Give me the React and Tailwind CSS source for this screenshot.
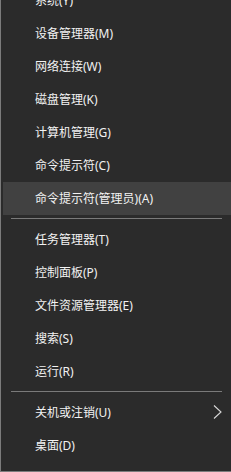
const groups = [
  ["系统(Y)", "设备管理器(M)", "网络连接(W)", "磁盘管理(K)", "计算机管理(G)", "命令提示符(C)", "命令提示符(管理员)(A)"],
  ["任务管理器(T)", "控制面板(P)", "文件资源管理器(E)", "搜索(S)", "运行(R)"],
  ["关机或注销(U)", "桌面(D)"],
];

function Item({ label, active, arrow }) {
  return (
    <div
      className={
        "relative flex items-center h-[33px] shrink-0 text-[12px] text-[#f2f2f2] " +
        (active ? "ml-[2px] pl-[32px] bg-[#414141]" : "pl-[34px]")
      }
    >
      {label}
      {arrow && (
        <svg className="absolute right-[9px] top-[9px]" width="9" height="14" viewBox="0 0 9 14" fill="none">
          <path d="M1 0.5 L8 7 L1 13.5" stroke="#d8d8d8" strokeWidth="1.1" />
        </svg>
      )}
    </div>
  );
}

export default function App() {
  return (
    <div className="w-[231px] h-[472px] overflow-hidden bg-[#2b2b2b] border-l border-b border-[#7c7c7c] font-['Noto_Sans','Noto_Sans_CJK_SC',sans-serif]">
      <div className="flex flex-col -mt-[16px]">
        {groups.map((g, gi) => (
          <div key={gi} className="flex flex-col">
            {gi > 0 && (
              <div className="pt-[3px] pb-[4px] pl-[10px] pr-[9px]">
                <div className="h-px bg-[#7a7a7a]" />
              </div>
            )}
            {g.map((label) => (
              <Item
                key={label}
                label={label}
                active={label === "命令提示符(管理员)(A)"}
                arrow={label === "关机或注销(U)"}
              />
            ))}
          </div>
        ))}
      </div>
    </div>
  );
}
